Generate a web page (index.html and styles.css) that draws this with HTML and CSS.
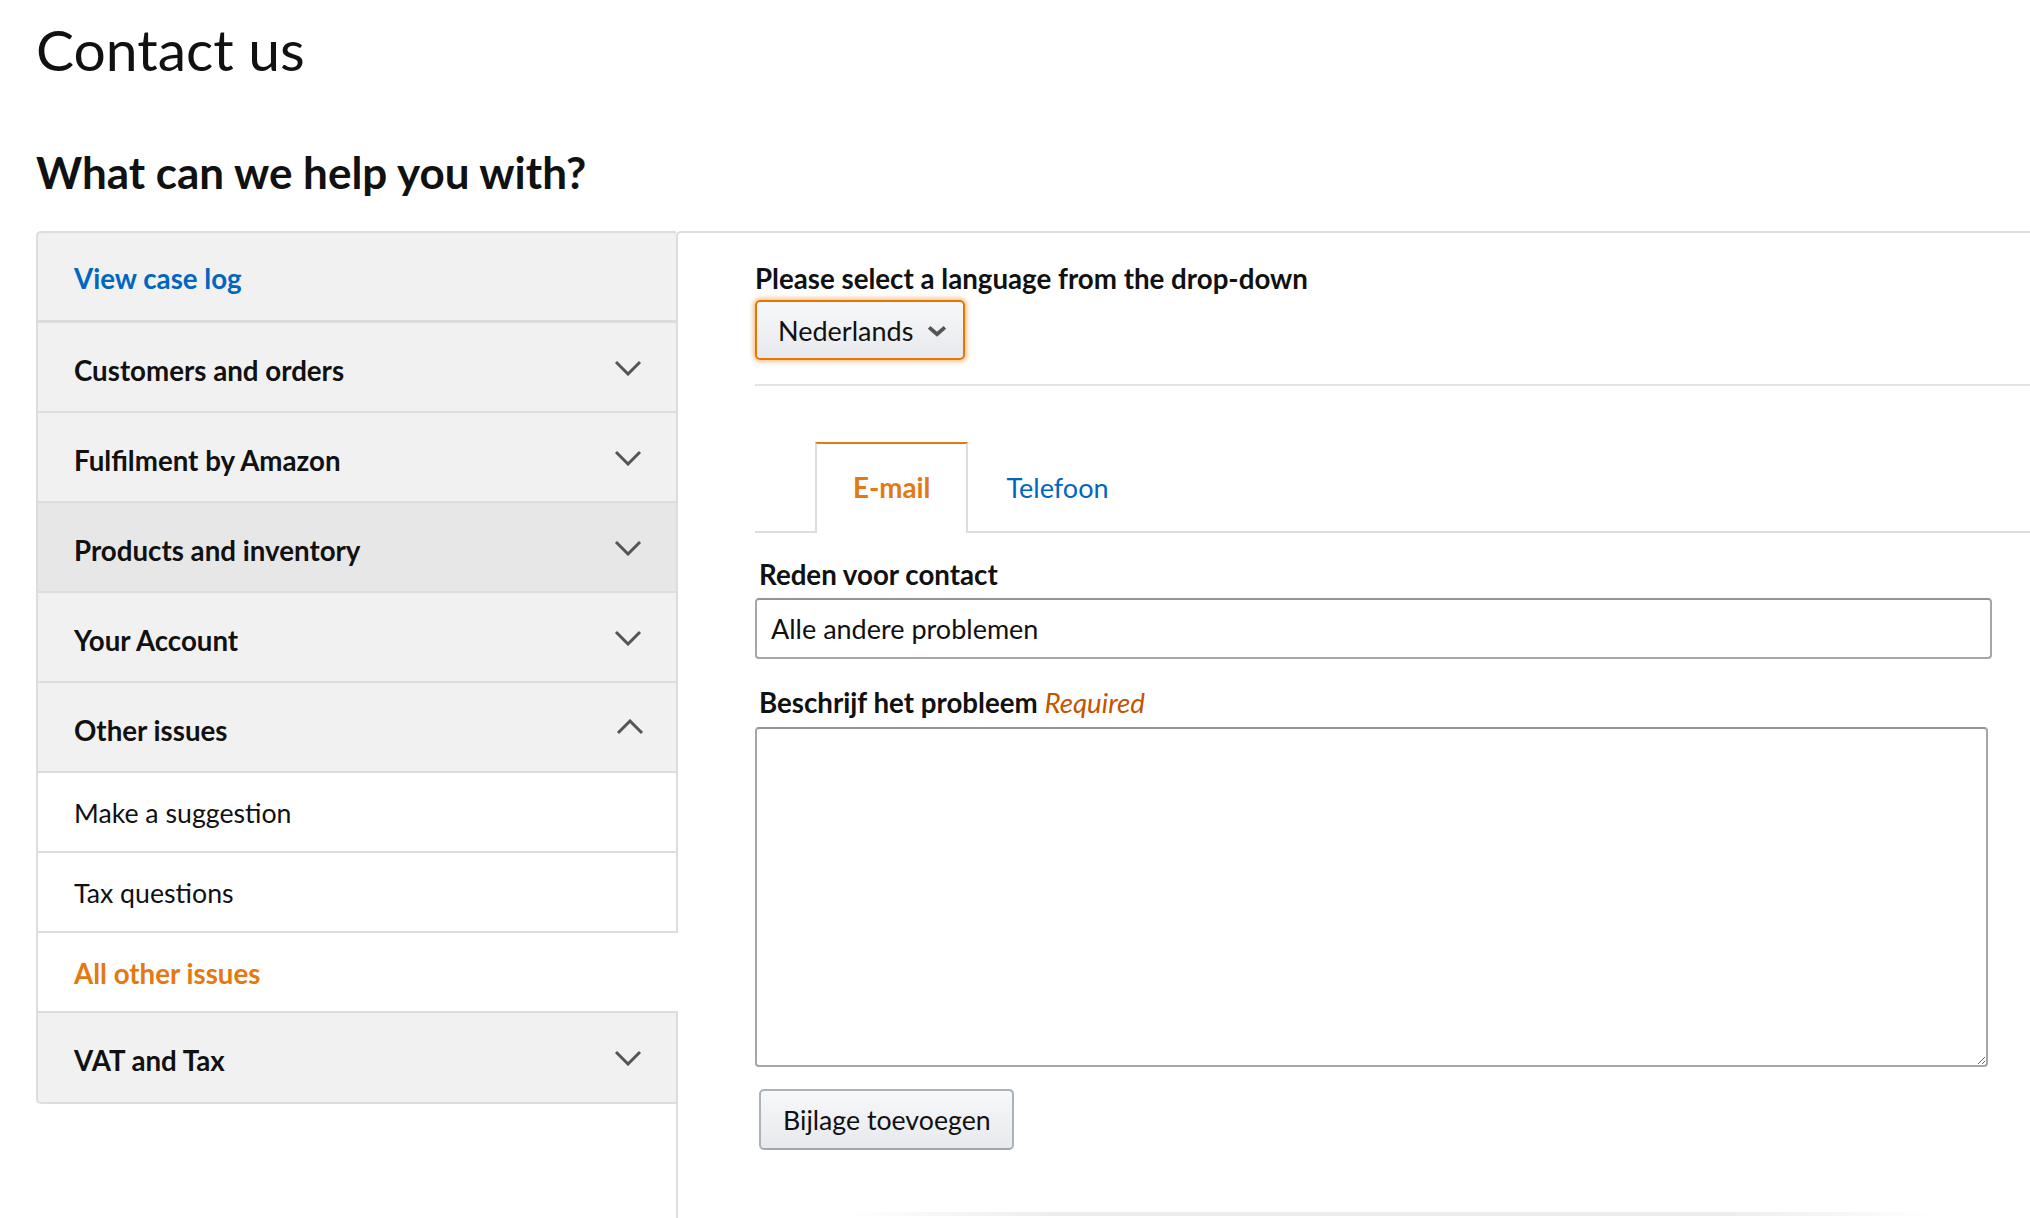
FILE: index.html
```html
<!DOCTYPE html>
<html lang="en">
<head>
<meta charset="utf-8">
<title>Contact us</title>
<link rel="stylesheet" href="styles.css">
</head>
<body>
<div class="page">
  <h1 class="title">Contact us</h1>
  <h2 class="subtitle">What can we help you with?</h2>
  <div class="layout">
    <nav class="sidebar">
      <div class="side-top"><a class="case-link" href="#">View case log</a></div>
      <div class="cat"><span>Customers and orders</span><svg class="chev" viewBox="0 0 28 16"><polyline points="2,2 14,14 26,2"/></svg></div>
      <div class="cat"><span>Fulfilment by Amazon</span><svg class="chev" viewBox="0 0 28 16"><polyline points="2,2 14,14 26,2"/></svg></div>
      <div class="cat hover"><span>Products and inventory</span><svg class="chev" viewBox="0 0 28 16"><polyline points="2,2 14,14 26,2"/></svg></div>
      <div class="cat"><span>Your Account</span><svg class="chev" viewBox="0 0 28 16"><polyline points="2,2 14,14 26,2"/></svg></div>
      <div class="cat"><span>Other issues</span><svg class="chev up" viewBox="0 0 28 16"><polyline points="2,14 14,2 26,14"/></svg></div>
      <div class="sub">Make a suggestion</div>
      <div class="sub">Tax questions</div>
      <div class="sub active">All other issues</div>
      <div class="cat last"><span>VAT and Tax</span><svg class="chev" viewBox="0 0 28 16"><polyline points="2,2 14,14 26,2"/></svg></div>
    </nav>
    <main class="panel">
      <div class="field-label lang-label">Please select a language from the drop-down</div>
      <div class="dropdown"><span>Nederlands</span><svg class="dd-chev" viewBox="0 0 19 11"><polyline points="2,2 9.5,8.5 17,2"/></svg></div>
      <div class="rule"></div>
      <div class="tabs">
        <div class="tab selected">E-mail</div>
        <div class="tab">Telefoon</div>
      </div>
      <div class="field-label">Reden voor contact</div>
      <div class="input">Alle andere problemen</div>
      <div class="field-label">Beschrijf het probleem <em class="req">Required</em></div>
      <textarea class="textarea"></textarea>
      <button class="btn" type="button">Bijlage toevoegen</button>
      <div class="bottom-shadow"></div>
    </main>
  </div>
</div>
</body>
</html>
```

FILE: styles.css
```css
html, body {
  margin: 0;
  padding: 0;
  overflow: hidden;
  background: #fff;
}
body {
  font-family: Lato, "Liberation Sans", Arial, sans-serif;
  color: #111;
  font-size: 27px;
  line-height: 1.2;
}
.page {
  padding-left: 36px;
}
.title {
  margin: 0;
  padding-top: 15px;
  font-size: 57px;
  font-weight: 400;
  line-height: 1.2;
}
.subtitle {
  margin: 63px 0 0 0;
  font-size: 44px;
  font-weight: 700;
  line-height: 1.2;
}
.layout {
  display: flex;
  margin-top: 32px;
  align-items: flex-start;
}
.sidebar {
  width: 638px;
  flex: none;
  border: 2px solid #ddd;
  border-right: none;
  border-radius: 5px 0 0 5px;
  background: #f1f1f1;
}
.side-top {
  box-sizing: border-box;
  display: flex;
  align-items: center;
  padding: 4px 0 0 36px;
  border-bottom: 3px solid #dcdcdc;
  height: 90px;
}
.case-link {
  color: #0066c0;
  font-weight: 700;
  font-size: 27.7px;
  text-decoration: none;
}
.cat {
  display: flex;
  align-items: center;
  justify-content: space-between;
  padding: 6px 34px 0 36px;
  box-sizing: border-box;
  height: 90px;
  border-bottom: 2px solid #ddd;
  font-weight: 700;
  font-size: 27.7px;
}
.cat.hover {
  background: #e7e7e7;
}
.cat.last {
  border-bottom: none;
  height: 89px;
}
.chev {
  width: 28px;
  height: 16px;
  fill: none;
  stroke: #555;
  stroke-width: 3;
  margin-top: -5px;
}
.chev.up {
  margin-right: -2px;
  margin-top: -7px;
}
.sub {
  height: 80px;
  box-sizing: border-box;
  display: flex;
  align-items: center;
  padding: 2px 0 0 36px;
  background: #fff;
  border-bottom: 2px solid #ddd;
  font-size: 26.7px;
}
.sub.active {
  color: #e47911;
  font-weight: 700;
  font-size: 27.7px;
  position: relative;
  z-index: 1;
  margin-right: -2px;
}
.panel {
  flex: 1;
  min-height: 1100px;
  border-left: 2px solid #ddd;
  border-top: 2px solid #ddd;
  border-top-left-radius: 5px;
  padding: 29px 0 0 77px;
}
.field-label {
  font-weight: 700;
  font-size: 27.7px;
  padding-left: 4px;
}
.lang-label {
  padding-left: 0;
}
.dropdown {
  margin-top: 5px;
  width: 210px;
  height: 60px;
  box-sizing: border-box;
  display: flex;
  align-items: center;
  justify-content: space-between;
  padding: 2px 16px 0 21px;
  border: 2px solid #e77600;
  border-radius: 5px;
  background: linear-gradient(#f7f8fa, #e7e9ec);
  box-shadow: 0 0 4px 2px rgba(228, 121, 17, 0.45);
}
.dd-chev {
  width: 20px;
  height: 12px;
  fill: none;
  stroke: #555;
  stroke-width: 3.6;
}
.rule {
  margin-top: 24px;
  height: 2px;
  background: #e3e3e3;
}
.tabs {
  display: flex;
  margin-top: 56px;
  padding-left: 60px;
  border-bottom: 2px solid #ddd;
}
.tab {
  height: 89px;
  box-sizing: border-box;
  display: flex;
  align-items: center;
  padding: 0 36px;
  color: #0066c0;
  border: 2px solid transparent;
  border-bottom: none;
}
.tab.selected {
  color: #e47911;
  font-weight: 700;
  font-size: 27.7px;
  background: #fff;
  border-color: #ddd;
  border-top-color: #e47911;
  margin-bottom: -2px;
  height: 91px;
  padding-bottom: 2px;
}
.tabs + .field-label {
  margin-top: 25px;
}
.input {
  margin-top: 6px;
  width: 1237px;
  height: 61px;
  box-sizing: border-box;
  display: flex;
  align-items: center;
  padding: 2px 0 0 14px;
  border: 2px solid #a6a6a6;
  border-top-color: #949494;
  border-radius: 4px;
  background: #fff;
}
.input + .field-label {
  margin-top: 27px;
}
.req {
  color: #c45500;
  font-weight: 400;
}
.textarea {
  display: block;
  margin-top: 8px;
  width: 1233px;
  height: 340px;
  box-sizing: border-box;
  border: 2px solid #a6a6a6;
  border-top-color: #949494;
  border-radius: 4px;
  font-family: inherit;
  font-size: 27px;
  background: #fff;
}
.btn {
  display: block;
  margin: 22px 0 0 4px;
  width: 255px;
  height: 61px;
  box-sizing: border-box;
  border: 2px solid #adb1b8;
  border-bottom-color: #a2a6ac;
  border-radius: 5px;
  background: linear-gradient(#f7f8fa, #e7e9ec);
  font-family: inherit;
  font-size: 26.7px;
  color: #111;
  text-align: left;
  padding: 2px 0 0 22px;
}
.bottom-shadow {
  margin: 62px 0 0 90px;
  width: 1090px;
  height: 4px;
  background: linear-gradient(to right, rgba(235,235,235,0), #ececec 20%, #ececec 80%, rgba(235,235,235,0));
}
```
